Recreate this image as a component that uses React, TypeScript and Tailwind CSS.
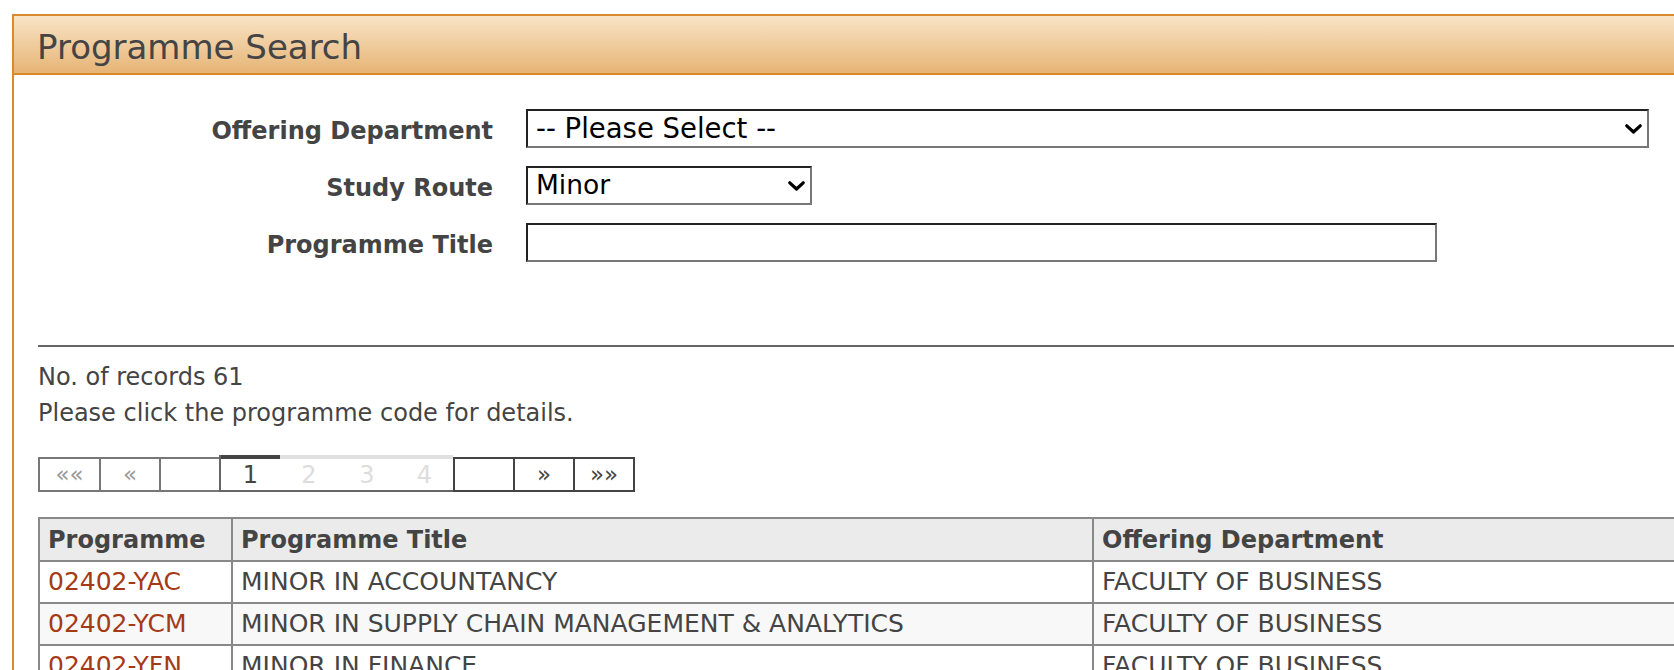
import React from "react";

function Chevron() {
  return (
    <svg width="17" height="10" viewBox="0 0 17 10" className="pointer-events-none absolute right-[7px] top-1/2 -translate-y-1/2">
      <path d="M1.8 1.8 L8.5 8 L15.2 1.8" fill="none" stroke="#000" strokeWidth="3.2" strokeLinecap="round" strokeLinejoin="round" />
    </svg>
  );
}

const rows = [
  { code: "02402-YAC", title: "MINOR IN ACCOUNTANCY", dept: "FACULTY OF BUSINESS" },
  { code: "02402-YCM", title: "MINOR IN SUPPLY CHAIN MANAGEMENT & ANALYTICS", dept: "FACULTY OF BUSINESS" },
  { code: "02402-YFN", title: "MINOR IN FINANCE", dept: "FACULTY OF BUSINESS" },
];

export default function App() {
  return (
    <div className="h-[670px] w-[1674px] overflow-hidden bg-white font-['DejaVu_Sans',sans-serif] text-[#444]">
      <div className="ml-[12px] mt-[14px] w-[1760px] border-2 border-[#d98b2c]">
        <div className="flex h-[59px] items-center border-b-2 border-[#d98b2c] bg-gradient-to-b from-[#f8e4c6] to-[#e6b475] pl-[23px] pt-[4px] text-[34px] leading-none">
          Programme Search
        </div>
        <div className="pl-[24px]">
          <div className="mt-[34px] grid grid-cols-[455px_1fr] items-center gap-x-[33px] gap-y-[18px]">
            <label className="pt-[4px] text-right text-[24px] font-bold leading-[30px]">Offering Department</label>
            <div className="relative h-[39px] w-[1123px]">
              <select className="block h-[39px] w-full appearance-none rounded-none border-2 border-t-[#222] border-l-[#222] border-r-[#777] border-b-[#777] bg-white pl-[8px] font-['DejaVu_Sans',sans-serif] text-[27.5px] leading-none text-black outline-none">
                <option>-- Please Select --</option>
              </select>
              <Chevron />
            </div>
            <label className="pt-[4px] text-right text-[24px] font-bold leading-[30px]">Study Route</label>
            <div className="relative h-[39px] w-[286px]">
              <select className="block h-[39px] w-full appearance-none rounded-none border-2 border-t-[#222] border-l-[#222] border-r-[#777] border-b-[#777] bg-white pl-[8px] font-['DejaVu_Sans',sans-serif] text-[26.5px] leading-none text-black outline-none">
                <option>Minor</option>
              </select>
              <Chevron />
            </div>
            <label className="pt-[4px] text-right text-[24px] font-bold leading-[30px]">Programme Title</label>
            <input
              type="text"
              className="block h-[39px] w-[911px] rounded-none border-2 border-t-[#222] border-l-[#222] border-r-[#777] border-b-[#777] bg-white px-[8px] text-[26px] text-black outline-none"
            />
          </div>

          <div className="mt-[83px] border-t-2 border-[#666]" />

          <div className="mt-[12px] text-[24px] leading-[36px]">
            <div>No. of records 61</div>
            <div>Please click the programme code for details.</div>
          </div>

          <div className="mt-[24px] flex items-end">
            <div className="flex h-[35px] w-[61px] items-center justify-center border-y-2 border-l-2 border-[#777] text-[23px] text-[#999]">««</div>
            <div className="flex h-[35px] w-[60px] items-center justify-center border-y-2 border-l-2 border-[#777] text-[23px] text-[#999]">«</div>
            <div className="flex h-[35px] w-[60px] items-center justify-center border-y-2 border-l-2 border-[#777]" />
            <div className="flex h-[37px] w-[234px] border-b-2 border-l-2 border-[#666]">
              <div className="flex h-full w-[59px] items-center justify-center border-t-4 border-[#444] text-[24px] text-[#444]">1</div>
              <div className="flex h-full w-[58px] items-center justify-center border-t-4 border-[#e0e0e0] text-[24px] text-[#ddd]">2</div>
              <div className="flex h-full w-[58px] items-center justify-center border-t-4 border-[#e0e0e0] text-[24px] text-[#ddd]">3</div>
              <div className="flex h-full w-[57px] items-center justify-center border-t-4 border-[#e0e0e0] text-[24px] text-[#ddd]">4</div>
            </div>
            <div className="flex h-[35px] w-[60px] items-center justify-center border-y-2 border-l-2 border-[#444]" />
            <div className="flex h-[35px] w-[60px] items-center justify-center border-y-2 border-l-2 border-[#444] text-[23px] text-[#444]">»</div>
            <div className="flex h-[35px] w-[62px] items-center justify-center border-2 border-[#444] text-[23px] text-[#444]">»»</div>
          </div>

          <table className="mt-[25px] w-[1720px] border-collapse text-[25px]">
            <thead>
              <tr className="h-[43px] bg-[#ebebeb] text-[24px]">
                <th className="w-[193px] border-2 border-[#888] pl-[8px] text-left font-bold">Programme</th>
                <th className="w-[861px] border-2 border-[#888] pl-[8px] text-left font-bold">Programme Title</th>
                <th className="border-2 border-[#888] pl-[8px] text-left font-bold">Offering Department</th>
              </tr>
            </thead>
            <tbody>
              {rows.map((r, i) => (
                <tr key={r.code} className={i % 2 === 1 ? "h-[42px] bg-[#f8f8f8]" : "h-[42px] bg-white"}>
                  <td className="border-2 border-[#888] pl-[8px] text-[#a53a16]">{r.code}</td>
                  <td className="border-2 border-[#888] pl-[8px]">{r.title}</td>
                  <td className="border-2 border-[#888] pl-[8px]">{r.dept}</td>
                </tr>
              ))}
            </tbody>
          </table>
        </div>
      </div>
    </div>
  );
}
